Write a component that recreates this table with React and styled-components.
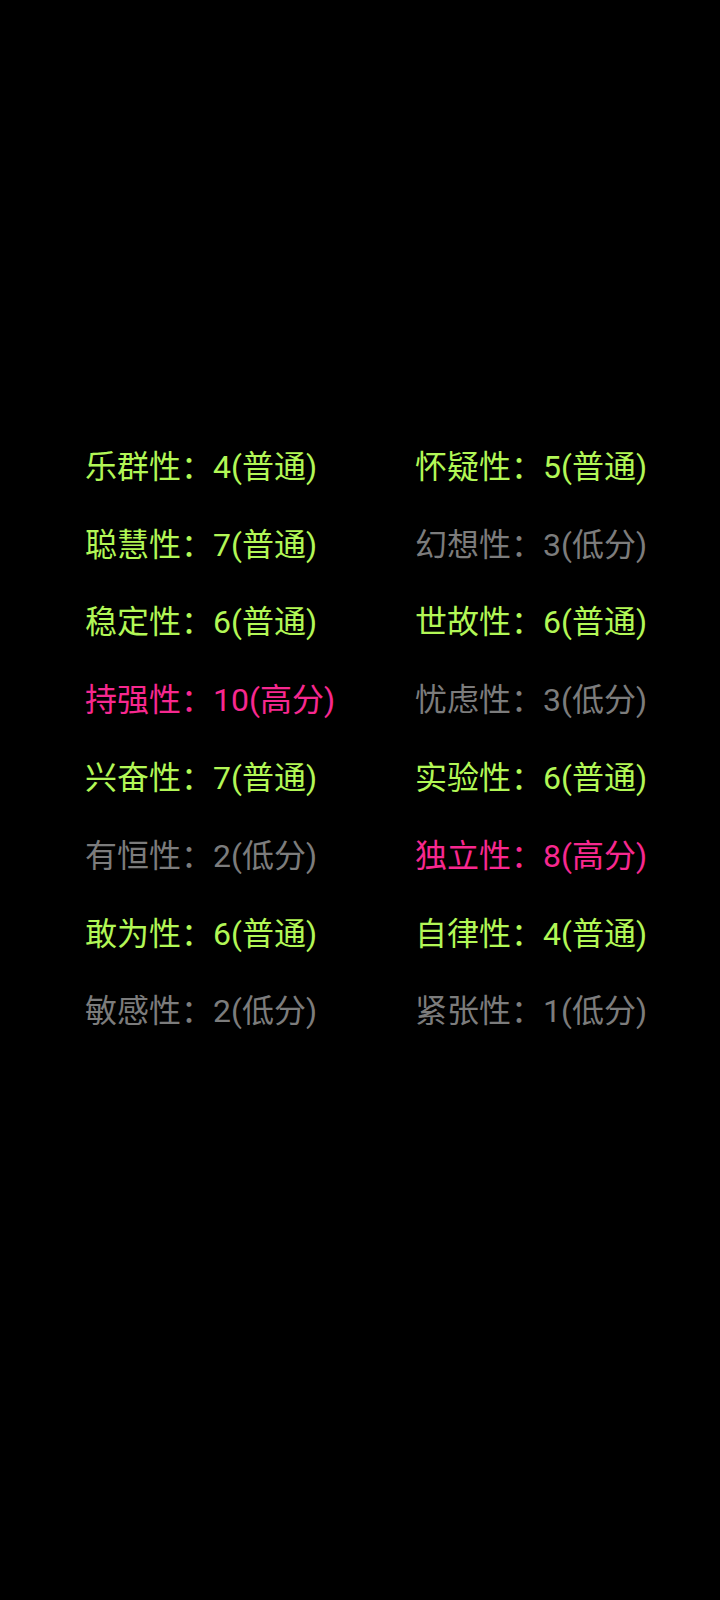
import React from "react";
import styled, { createGlobalStyle } from "styled-components";

const traits = [
    ["乐群性", 4, "普通"], ["怀疑性", 5, "普通"],
    ["聪慧性", 7, "普通"], ["幻想性", 3, "低分"],
    ["稳定性", 6, "普通"], ["世故性", 6, "普通"],
    ["持强性", 10, "高分"], ["忧虑性", 3, "低分"],
    ["兴奋性", 7, "普通"], ["实验性", 6, "普通"],
    ["有恒性", 2, "低分"], ["独立性", 8, "高分"],
    ["敢为性", 6, "普通"], ["自律性", 4, "普通"],
    ["敏感性", 2, "低分"], ["紧张性", 1, "低分"],
];

const colors = {
    普通: "#b2f756",
    高分: "#f7288f",
    低分: "#7c7c7c",
};

export default function App() {
    return (
        <>
            <GlobalStyle />
            <Page>
                <Grid>
                    {traits.map(([name, score, level]) => (
                        <Trait key={name} level={level}>
                            {name}：{score}({level})
                        </Trait>
                    ))}
                </Grid>
            </Page>
        </>
    );
}

const GlobalStyle = createGlobalStyle`
    html, body {
        margin: 0;
        padding: 0;
        background: #000;
    }
    body {
        font-family: Roboto, "Noto Sans CJK SC", sans-serif;
    }
`;

const Page = styled.div`
    width: 720px;
    height: 1600px;
    background: #000;
    padding-top: 425px;
    box-sizing: border-box;
`;

const Grid = styled.div`
    display: grid;
    grid-template-columns: 330px 1fr;
    grid-auto-rows: 77.8px;
    padding-left: 85px;
`;

const Trait = styled.div`
    display: flex;
    align-items: center;
    font-size: 32px;
    white-space: nowrap;
    color: ${(p) => colors[p.level]};
`;
